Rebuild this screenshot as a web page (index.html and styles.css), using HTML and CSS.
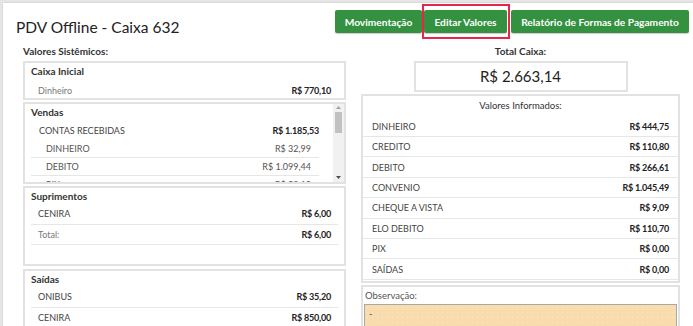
FILE: index.html
```html
<!DOCTYPE html>
<html lang="pt-BR">
<head>
<meta charset="UTF-8">
<title>PDV Offline - Caixa 632</title>
<link rel="stylesheet" href="styles.css">
</head>
<body>
<div class="panel">
  <div class="top">
    <h1>PDV Offline - Caixa 632</h1>
    <div class="actions">
      <button class="btn btn-mov">Movimentação</button>
      <button class="btn btn-edit marked">Editar Valores</button>
      <button class="btn btn-rel">Relatório de Formas de Pagamento</button>
    </div>
  </div>

  <div class="cols">
    <div class="col">
      <div class="col-label">Valores Sistêmicos:</div>

      <div class="box box-inicial">
        <div class="box-title">Caixa Inicial</div>
        <div class="row plain"><span class="light">Dinheiro</span><b>R$ 770,10</b></div>
      </div>

      <div class="box box-vendas">
        <div class="box-title">Vendas</div>
        <div class="vendas-list">
          <div class="row head"><span>CONTAS RECEBIDAS</span><b>R$ 1.185,53</b></div>
          <div class="row sub"><span>DINHEIRO</span><span>R$ 32,99</span></div>
          <div class="row sub"><span>DEBITO</span><span>R$ 1.099,44</span></div>
          <div class="row sub"><span>PIX</span><span>R$ 53,10</span></div>
        </div>
        <div class="scrollbar">
          <svg width="11" height="78" viewBox="0 0 11 78">
            <rect x="0" y="0" width="11" height="78" fill="#f1f1f1"/>
            <polygon points="3,5 8,5 5.5,2" fill="#a3a3a3"/>
            <rect x="2" y="8" width="7" height="21" fill="#c1c1c1"/>
            <polygon points="3,72 8,72 5.5,75" fill="#505050"/>
          </svg>
        </div>
      </div>

      <div class="box box-sup">
        <div class="box-title">Suprimentos</div>
        <div class="row"><span>CENIRA</span><b>R$ 6,00</b></div>
        <div class="row"><span class="light">Total:</span><b>R$ 6,00</b></div>
      </div>

      <div class="box">
        <div class="box-title">Saídas</div>
        <div class="row"><span>ONIBUS</span><b>R$ 35,20</b></div>
        <div class="row"><span>CENIRA</span><b>R$ 850,00</b></div>
      </div>
    </div>

    <div class="col">
      <div class="col-label center">Total Caixa:</div>
      <div class="total">R$ 2.663,14</div>

      <div class="box box-inf">
        <div class="inf-title">Valores Informados:</div>
        <div class="row inf"><span>DINHEIRO</span><b>R$ 444,75</b></div>
        <div class="row inf"><span>CREDITO</span><b>R$ 110,80</b></div>
        <div class="row inf"><span>DEBITO</span><b>R$ 266,61</b></div>
        <div class="row inf"><span>CONVENIO</span><b>R$ 1.045,49</b></div>
        <div class="row inf"><span>CHEQUE A VISTA</span><b>R$ 9,09</b></div>
        <div class="row inf"><span>ELO DEBITO</span><b>R$ 110,70</b></div>
        <div class="row inf"><span>PIX</span><b>R$ 0,00</b></div>
        <div class="row inf"><span>SAÍDAS</span><b>R$ 0,00</b></div>
      </div>

      <div class="box box-obs">
        <div class="obs-label">Observação:</div>
        <div class="obs-text">-</div>
      </div>
    </div>
  </div>
</div>
</body>
</html>
```

FILE: styles.css
```css
html, body {
  height: 100%;
}
body {
  margin: 0;
  overflow: hidden;
  background: #e6e6e6;
  font-family: "Lato", "Open Sans", sans-serif;
  font-size: 9px;
  color: #444;
}
.panel {
  margin: 3px 0 0 3px;
  width: 700px;
  height: 400px;
  background: #fff;
  box-shadow: 0 0 2px rgba(0, 0, 0, 0.15);
}

/* header */
.top {
  display: flex;
  justify-content: space-between;
  align-items: flex-start;
  height: 40px;
  padding: 7px 14px 0 13px;
  box-sizing: border-box;
}
h1 {
  margin: 5px 0 0;
  font-size: 15.5px;
  line-height: 24px;
  font-weight: 400;
  color: #222;
}
.actions {
  display: flex;
}
.btn {
  position: relative;
  height: 23px;
  padding: 0;
  border: 0;
  border-radius: 2px;
  background: #33913f;
  color: #fff;
  font-family: inherit;
  font-size: 10.2px;
  font-weight: 700;
  box-shadow: 0 1px 1px rgba(0, 0, 0, 0.2);
}
.btn-mov {
  width: 87px;
}
.btn-edit {
  width: 83px;
  margin-left: 2px;
}
.btn-rel {
  width: 178px;
  margin-left: 4px;
}
.marked::after {
  content: "";
  position: absolute;
  top: -6px;
  bottom: -6px;
  left: -2px;
  right: -3px;
  border: 2px solid #e8264b;
}

/* columns */
.cols {
  display: grid;
  grid-template-columns: 323px 319px;
  column-gap: 15px;
  padding-left: 20px;
}
.col-label {
  height: 16px;
  line-height: 16px;
  margin-bottom: 2px;
  font-size: 10px;
  font-weight: 700;
  color: #333;
}
.center {
  text-align: center;
}

.box {
  border: 2px solid #e2e2e2;
  padding: 0 6px;
  margin-bottom: 2px;
}
.box-title {
  line-height: 16px;
  font-size: 10px;
  font-weight: 700;
  color: #333;
}
.row {
  display: flex;
  justify-content: space-between;
  align-items: center;
  height: 20.5px;
  padding: 0 7px;
  box-sizing: border-box;
  border-bottom: 1px solid #e6e6e6;
}
.row b {
  color: #222;
  letter-spacing: -0.2px;
}
.row.plain {
  border: 0;
  height: 19px;
  padding-top: 3px;
}
.light {
  color: #777;
}

.box-inicial {
  height: 39px;
  box-sizing: border-box;
}

.box-vendas {
  position: relative;
  height: 82px;
  box-sizing: border-box;
  padding-right: 0;
  overflow: hidden;
}
.scrollbar {
  position: absolute;
  top: 0;
  right: 0;
  width: 11px;
  height: 78px;
}
.scrollbar svg {
  display: block;
}
.vendas-list {
  margin-top: 1px;
  margin-right: 25px;
}
.row.head {
  height: 19px;
  padding: 0 0 0 8px;
  border: 0;
}
.row.sub {
  height: 18px;
  padding: 0 8px 0 15px;
  color: #555;
}

.box-sup {
  height: 80px;
  box-sizing: border-box;
  margin-bottom: 3px;
}

/* right column */
.total {
  width: 214px;
  height: 31px;
  margin: 0 auto 2px;
  border: 2px solid #e2e2e2;
  box-sizing: border-box;
  text-align: center;
  line-height: 27px;
  font-size: 15px;
  color: #222;
}
.box-inf {
  padding: 0 0 1px;
}
.inf-title {
  text-align: center;
  line-height: 20.6px;
  font-size: 9.5px;
  color: #333;
}
.row.inf {
  height: 20.4px;
  padding: 0 9px;
}
.box-obs {
  padding: 0 1px;
  height: 60px;
}
.obs-label {
  line-height: 17px;
  padding-left: 1px;
  font-size: 9.5px;
  color: #555;
}
.obs-text {
  height: 50px;
  padding: 3px 4px;
  border: 1px solid #a8a8a8;
  background-color: #f8dcae;
  background-image: radial-gradient(#fbe8c8 0.7px, transparent 0.8px);
  background-size: 5px 5px;
}
```
